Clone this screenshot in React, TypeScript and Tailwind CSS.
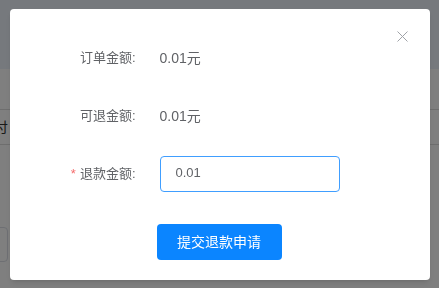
import React from 'react';

const font = { fontFamily: '"Liberation Sans", "Noto Sans CJK SC", sans-serif' };

const FormRow = ({ label, required, children }: { label: string; required?: boolean; children: React.ReactNode }) => (
  <div className="flex items-center h-9 mb-[22px]">
    <div className="w-[100px] pr-6 text-right text-[13px] text-[#606266]">
      {required && <span className="text-[#f56c6c] mr-1">*</span>}
      {label}
    </div>
    <div className="flex-1 text-sm text-[#606266]">{children}</div>
  </div>
);

const App = () => {
  return (
    <div className="relative w-full h-screen overflow-hidden bg-white" style={font}>
      {/* page behind the dialog */}
      <div className="h-[69px] bg-[#ecf2fa]" />
      <div className="h-[41px] border-b border-[#dcdcdc]" />
      <div className="h-[35px] border-b border-[#dcdcdc] flex items-center text-sm text-[#333] -ml-[6px]">
        付
      </div>
      <div className="mt-[82px] w-[14px] h-[35px] -ml-[6px] border border-[#dcdfe6] rounded" />

      {/* mask + dialog */}
      <div className="fixed inset-0 bg-black/50 flex items-center justify-center">
        <div className="relative w-[420px] h-[271px] bg-white rounded-sm shadow-md pt-[31px] pl-[50px]">
          <button className="absolute right-[22px] top-[22px] w-[11px] h-[11px] text-[#a0a3a8]">
            <svg viewBox="0 0 11 11" width="11" height="11" fill="none" stroke="currentColor" strokeWidth="1">
              <path d="M0.5 0.5 L10.5 10.5 M10.5 0.5 L0.5 10.5" />
            </svg>
          </button>
          <FormRow label="订单金额:">0.01元</FormRow>
          <FormRow label="可退金额:">0.01元</FormRow>
          <FormRow label="退款金额:" required>
            <div className="w-[180px] h-9 border border-[#409eff] rounded flex items-center px-[15px] text-[13px] text-[#606266]">
              0.01
            </div>
          </FormRow>
          <button className="ml-[97px] mt-[10px] w-[125px] h-9 rounded bg-[#0b85ff] text-white text-sm">
            提交退款申请
          </button>
        </div>
      </div>
    </div>
  );
};

export default App;
